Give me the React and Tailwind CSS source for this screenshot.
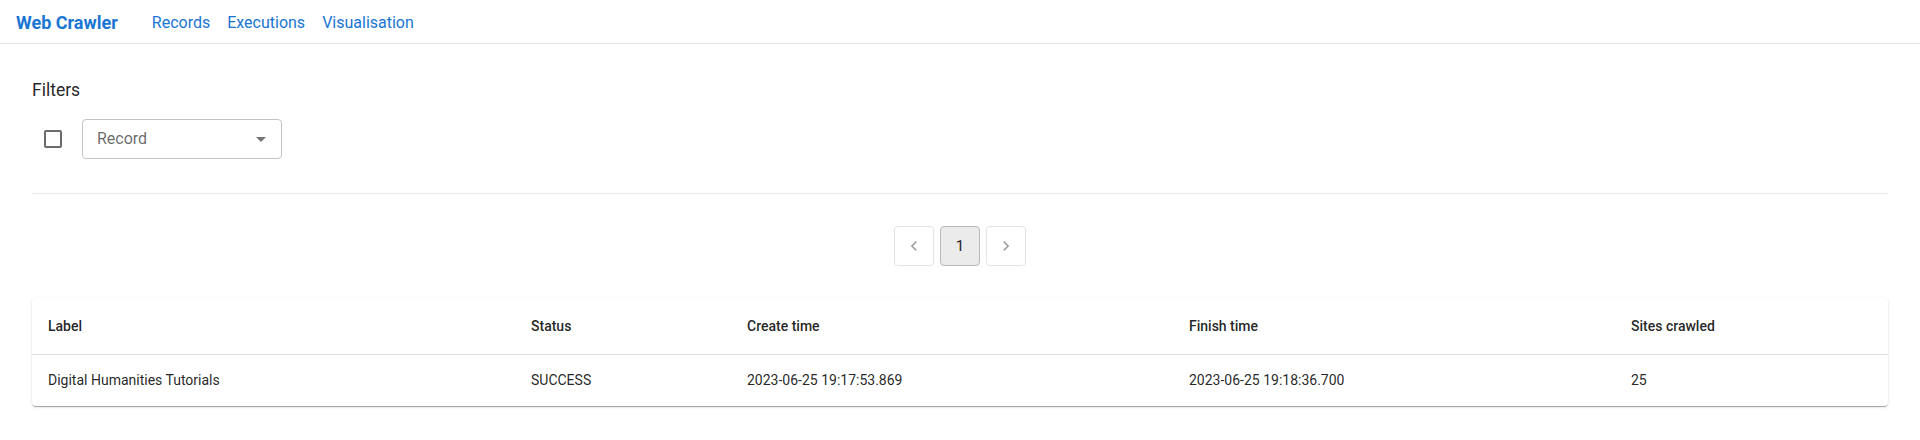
import React from "react";

const cols = [
  { label: "Label", w: "w-[483px]" },
  { label: "Status", w: "w-[216px]" },
  { label: "Create time", w: "w-[442px]" },
  { label: "Finish time", w: "w-[442px]" },
  { label: "Sites crawled", w: "w-[273px]" },
];

const row = [
  "Digital Humanities Tutorials",
  "SUCCESS",
  "2023-06-25 19:17:53.869",
  "2023-06-25 19:18:36.700",
  "25",
];

function Chevron({ dir }) {
  return (
    <svg width="20" height="20" viewBox="0 0 24 24" fill="#a3a3a3">
      {dir === "left" ? (
        <path d="M15.41 7.41 14 6l-6 6 6 6 1.41-1.41L10.83 12z" />
      ) : (
        <path d="M10 6 8.59 7.41 13.17 12l-4.58 4.59L10 18l6-6z" />
      )}
    </svg>
  );
}

export default function App() {
  return (
    <div className="min-h-[440px] bg-white font-['Roboto',sans-serif] text-[rgba(0,0,0,0.87)]">
      <nav className="flex h-[44px] items-center border-b border-[#e6e6e6] pl-4 pt-[2px]">
        <span className="text-[18px] font-bold text-[#1976d2]">Web Crawler</span>
        <div className="ml-[34px] flex gap-[17px] text-[16px] text-[#1976d2]">
          <span>Records</span>
          <span>Executions</span>
          <span>Visualisation</span>
        </div>
      </nav>

      <main className="px-8 pt-8">
        <div className="text-[17.5px] leading-[28px]">Filters</div>
        <div className="mt-[15px] flex items-center">
          <div className="ml-[12px] h-[18px] w-[18px] rounded-[2px] border-2 border-[#6b6b6b]" />
          <div className="ml-[20px] flex h-[40px] w-[200px] items-center justify-between rounded-[4px] border border-[#c4c4c4] pl-[14px] pr-[15px]">
            <span className="text-[16px] text-[rgba(0,0,0,0.6)]">Record</span>
            <svg width="10" height="5" viewBox="0 0 10 5" fill="#757575">
              <path d="M0 0l5 5 5-5z" />
            </svg>
          </div>
        </div>

        <div className="mt-[34px] h-px bg-[#e8e8e8]" />

        <div className="mt-[32px] flex justify-center gap-[6px]">
          <button className="flex h-[40px] w-[40px] items-center justify-center rounded-[4px] border border-[#e3e3e3] bg-white">
            <Chevron dir="left" />
          </button>
          <button className="flex h-[40px] w-[40px] items-center justify-center rounded-[4px] border border-[#b8b8b8] bg-[#ebebeb] text-[15px] text-[#222]">
            1
          </button>
          <button className="flex h-[40px] w-[40px] items-center justify-center rounded-[4px] border border-[#e3e3e3] bg-white">
            <Chevron dir="right" />
          </button>
        </div>

        <div className="mt-[32px] overflow-hidden rounded-[4px] bg-white shadow-[0_2px_1px_-1px_rgba(0,0,0,0.2),0_1px_1px_0_rgba(0,0,0,0.14),0_1px_3px_0_rgba(0,0,0,0.12)]">
          <table className="w-full table-fixed border-collapse text-left text-[14px]">
            <colgroup>
              {cols.map((c) => (
                <col key={c.label} className={c.w} />
              ))}
            </colgroup>
            <thead>
              <tr className="border-b border-[#e0e0e0]">
                {cols.map((c) => (
                  <th key={c.label} className="h-[56px] px-4 font-medium leading-[24px]">
                    {c.label}
                  </th>
                ))}
              </tr>
            </thead>
            <tbody>
              <tr>
                {row.map((v, i) => (
                  <td key={i} className="h-[52px] px-4 leading-[20px]">
                    {v}
                  </td>
                ))}
              </tr>
            </tbody>
          </table>
        </div>
      </main>
    </div>
  );
}
